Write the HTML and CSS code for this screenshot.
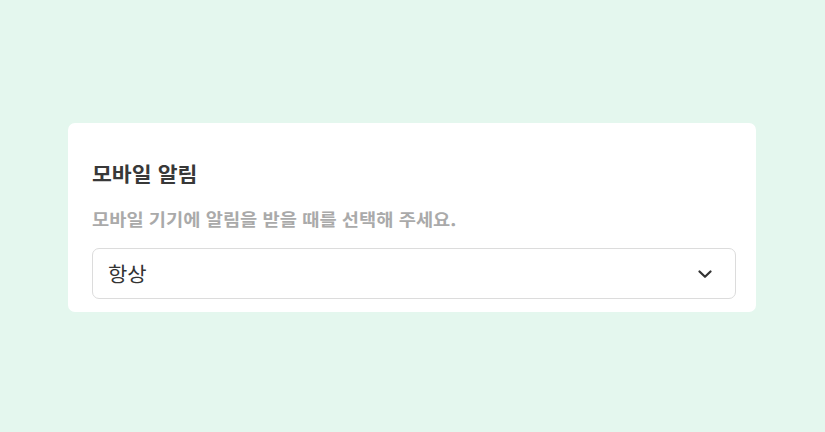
FILE: index.html
```html
<!DOCTYPE html>
<html lang="ko">
<head>
<meta charset="utf-8">
<link rel="stylesheet" href="styles.css">
</head>
<body>
<div class="page">
  <section class="card">
    <h2 class="title"><span class="stretch mid">모바일 알림</span></h2>
    <p class="desc"><span class="stretch wide">모바일 기기에 알림을 받을 때를 선택해 주세요.</span></p>
    <div class="select">
      <span class="value stretch">항상</span>
      <svg class="chev" width="14" height="14" viewBox="0 0 14 14"><path d="M1.5 4.5 L7 9.8 L12.5 4.5" fill="none" stroke="#333" stroke-width="2.2" stroke-linecap="round" stroke-linejoin="round"/></svg>
    </div>
  </section>
</div>
</body>
</html>
```
FILE: styles.css
```css
html, body { margin: 0; padding: 0; }
body {
  background: #e4f7ee;
  font-family: "Noto Sans CJK KR", "Noto Sans", sans-serif;
  width: 825px;
  height: 432px;
}
.page {
  padding: 123px 69px 0 68px;
}
.card {
  background: #fff;
  border-radius: 7px;
  padding: 38px 20px 13px 24px;
  height: 189px;
  box-sizing: border-box;
}
.stretch {
  display: inline-block;
  transform: scaleX(1.05);
  transform-origin: left center;
}
.stretch.mid {
  transform: scaleX(1.08);
}
.stretch.wide {
  transform: scaleX(1.1);
}
.title {
  margin: 0;
  font-size: 20px;
  font-weight: 700;
  color: #383838;
  line-height: 26px;
}
.desc {
  margin: 21px 0 0;
  font-size: 17px;
  font-weight: 700;
  color: #aaaaaa;
  line-height: 22px;
}
.select {
  margin-top: 18px;
  height: 51px;
  box-sizing: border-box;
  border: 1px solid #dcdcdc;
  border-radius: 7px;
  display: flex;
  align-items: center;
  justify-content: space-between;
  padding: 0 23px 0 15px;
}
.value {
  font-size: 20px;
  color: #333;
}
.chev { display: block; }
```
